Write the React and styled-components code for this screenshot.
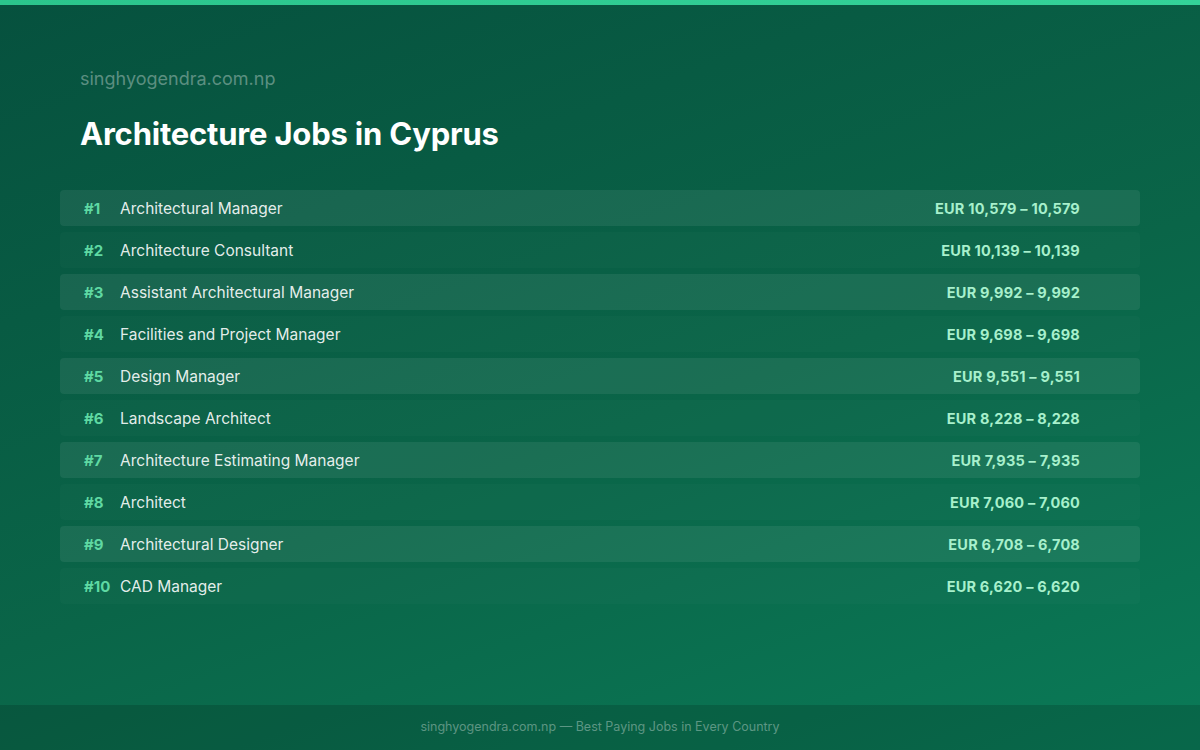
import React from 'react'
import styled, { createGlobalStyle } from 'styled-components'

const Global = createGlobalStyle`
  body { margin: 0; font-family: Inter, "Noto Sans", sans-serif; }
`

const Page = styled.div`
  width: 1200px;
  height: 750px;
  display: flex;
  flex-direction: column;
  background: linear-gradient(160deg, #06513e 0%, #0a6548 55%, #0a7a57 100%);
  overflow: hidden;
`

const TopBar = styled.div`
  height: 5px;
  background: linear-gradient(90deg, #2bc58c, #34d399);
`

const Main = styled.main`
  flex: 1;
  padding: 63px 60px 0;
`

const Domain = styled.div`
  padding-left: 20px;
  font-size: 18px;
  color: rgba(255, 255, 255, 0.35);
  line-height: 22px;
`

const Title = styled.h1`
  margin: 24px 0 36px;
  padding-left: 20px;
  font-size: 31px;
  font-weight: 700;
  color: #fff;
  line-height: 40px;
  letter-spacing: -0.2px;
`

const List = styled.div`
  display: flex;
  flex-direction: column;
  gap: 6px;
`

const Row = styled.div`
  height: 36px;
  display: flex;
  align-items: center;
  padding: 0 60px 0 24px;
  border-radius: 4px;
  background: ${p => (p.$alt ? 'rgba(255,255,255,0.07)' : 'rgba(255,255,255,0.02)')};
`

const Rank = styled.span`
  width: 36px;
  font-size: 15px;
  font-weight: 700;
  color: #5fd9a3;
`

const Name = styled.span`
  flex: 1;
  font-size: 15.5px;
  color: rgba(255, 255, 255, 0.9);
`

const Salary = styled.span`
  font-size: 14.5px;
  font-weight: 700;
  letter-spacing: 0.2px;
  color: #a7f0cc;
`

const Footer = styled.footer`
  height: 45px;
  display: flex;
  align-items: center;
  justify-content: center;
  padding-bottom: 3px;
  box-sizing: border-box;
  background: rgba(0, 0, 0, 0.15);
  font-size: 12.5px;
  color: rgba(255, 255, 255, 0.35);
`

const jobs = [
  ['Architectural Manager', 'EUR 10,579 – 10,579'],
  ['Architecture Consultant', 'EUR 10,139 – 10,139'],
  ['Assistant Architectural Manager', 'EUR 9,992 – 9,992'],
  ['Facilities and Project Manager', 'EUR 9,698 – 9,698'],
  ['Design Manager', 'EUR 9,551 – 9,551'],
  ['Landscape Architect', 'EUR 8,228 – 8,228'],
  ['Architecture Estimating Manager', 'EUR 7,935 – 7,935'],
  ['Architect', 'EUR 7,060 – 7,060'],
  ['Architectural Designer', 'EUR 6,708 – 6,708'],
  ['CAD Manager', 'EUR 6,620 – 6,620'],
]

export default function App() {
  return (
    <Page>
      <Global />
      <TopBar />
      <Main>
        <Domain>singhyogendra.com.np</Domain>
        <Title>Architecture Jobs in Cyprus</Title>
        <List>
          {jobs.map(([name, pay], i) => (
            <Row key={name} $alt={i % 2 === 0}>
              <Rank>#{i + 1}</Rank>
              <Name>{name}</Name>
              <Salary>{pay}</Salary>
            </Row>
          ))}
        </List>
      </Main>
      <Footer>singhyogendra.com.np — Best Paying Jobs in Every Country</Footer>
    </Page>
  )
}
